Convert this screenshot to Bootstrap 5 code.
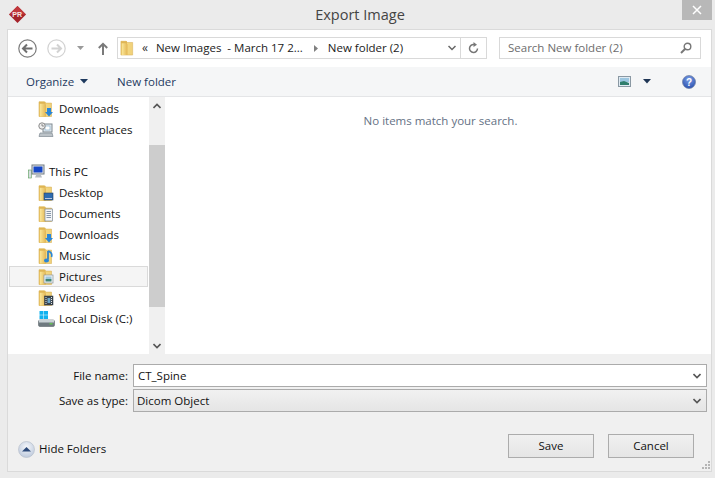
<!DOCTYPE html>
<html lang="en">
<head>
<meta charset="utf-8">
<title>Export Image</title>
<link href="https://cdn.jsdelivr.net/npm/bootstrap@5.3.0/dist/css/bootstrap.min.css" rel="stylesheet">
<style>
html,body{width:715px;height:478px;overflow:hidden;margin:0}
body{background:#ebebeb;font-family:"Open Sans","Noto Sans",sans-serif;font-size:11.5px;color:#111;line-height:1}
.dlg-shell{width:715px;height:478px;display:flex;flex-direction:column}
.dlg-title{height:29px;position:relative;flex:none}
.dlg-title-text{font-size:14.5px;color:#444;padding-top:8px;text-align:center;padding-left:5px}
.dlg-logo{position:absolute;left:9px;top:6px}
.dlg-close{position:absolute;left:682px;top:0;width:30px;height:20px;background:#b8b8b8;display:flex;align-items:center;justify-content:center}
.dlg-panel{margin-left:7px;width:705px;height:443px;border:1px solid #dadada;background:#f0f0f0;display:flex;flex-direction:column;flex:none}
.nav-strip{height:37px;background:#fff;display:flex;align-items:center;flex:none;padding:0 0 1px 10px}
.round-btn{width:19px;height:19px;flex:none}
.fwd-btn{margin-left:10px}
.hist-caret{margin-left:11px}
.up-btn{margin-left:13px}
.addr-box{width:370px;height:22px;margin-left:9px;border:1px solid #d9d9d9;display:flex;align-items:center;background:#fff;flex:none}
.addr-folder{margin-left:2px}
.addr-back{margin-left:7px;font-size:12px;color:#333}
.addr-crumb{margin-left:8px;color:#222;white-space:nowrap}
.addr-arrow{margin-left:11px}
.addr-last{margin-left:9px;color:#222;white-space:nowrap}
.addr-chev{margin-left:auto;margin-right:4px}
.addr-sep{width:26px;height:20px;border-left:1px solid #d9d9d9;display:flex;align-items:center;justify-content:center;flex:none}
.search-box{width:202px;height:22px;margin-left:12px;border:1px solid #d9d9d9;display:flex;align-items:center;padding:0 8px;color:#6d6d6d;justify-content:space-between;flex:none}
.cmd-strip{height:30px;background:#f5f6f7;border-bottom:1px solid #e4e5e7;display:flex;align-items:center;flex:none;color:#1e3a5f;padding-left:18px}
.cmd-caret{margin-left:6px}
.cmd-new{margin-left:29px}
.cmd-right{margin-left:auto;display:flex;align-items:center}
.view-caret{margin-left:12px}
.help-icon{margin:0 15px 0 31px}
.main-area{height:257px;display:flex;flex:none;background:#fff}
.tree-pane{width:140px;height:257px;overflow:hidden;flex:none;background:#fff;padding-top:1px}
.tree-row{height:21px;display:flex;align-items:center;white-space:nowrap;margin-left:1px;border:1px solid transparent;padding-left:28px;gap:5px;width:139px}
.tree-row.top-level{padding-left:18px;gap:4px}
.tree-row.disk-row{padding-left:28px;gap:3px}
.tree-row.picked{background:#f5f5f5;border-color:#dadada}
.tree-row svg{flex:none}
.scroll-rail{width:16px;background:#f0f0f0;flex:none;display:flex;flex-direction:column;margin-left:1px}
.scroll-cap{height:17px;display:flex;align-items:center;justify-content:center;flex:none}
.scroll-space-a{height:31px;flex:none}
.scroll-thumb{height:162px;background:#cdcdcd;flex:none}
.scroll-space-b{flex:1}
.empty-pane{flex:1;text-align:center;color:#647184;padding-top:18px;padding-left:4px;margin-left:1px}
.foot-area{flex:1;position:relative;padding-top:10px}
.form-line{display:flex;align-items:center;height:23px;margin-bottom:2px}
.fld-caption{width:125px;text-align:right;padding-right:5px;flex:none;color:#111}
.combo-box{width:574px;height:23px;border:1px solid #ababab;display:flex;align-items:center;justify-content:space-between;padding:0 5px 0 4px;flex:none;background:#fff}
.combo-box.grey{background:linear-gradient(#f1f1f1,#e5e5e5);padding-left:3px}
.foot-actions{display:flex;align-items:center;margin-top:22px}
.hide-link{display:flex;align-items:center;gap:4px;margin:6px 0 0 10px}
.dlg-btn{width:86px;height:24px;border:1px solid #acacac;background:linear-gradient(#f0f0f0,#e5e5e5);display:flex;align-items:center;justify-content:center;color:#111;flex:none}
.dlg-btn.first{margin-left:auto}
.dlg-btn.last{margin-left:14px;margin-right:17px}
.grip{position:absolute;right:1px;bottom:1px}
.defs-holder{position:absolute;width:0;height:0}
</style>
</head>
<body>
<svg class="defs-holder">
<defs>
<linearGradient id="fg" x1="0" y1="0" x2="1" y2="0"><stop offset="0" stop-color="#fbe89a"/><stop offset="1" stop-color="#e2b553"/></linearGradient>
<linearGradient id="fb" x1="0" y1="0" x2="1" y2="0"><stop offset="0" stop-color="#f7df8a"/><stop offset="1" stop-color="#f0d078"/></linearGradient>
<symbol id="folder" viewBox="0 0 16 16">
<path d="M1 .8h5.500l1 1.300H13.500V15.500H1z" fill="url(#fb)" stroke="#d9b35c" stroke-width=".6"/>
<path d="M1 .8h6.500v14.700H1z" fill="#dfb554"/>
<path d="M1.800 2.800h5l1.200 1.200v11.500H1.800z" fill="url(#fg)"/>
</symbol>
</defs>
</svg>
<div class="dlg-shell">
  <div class="dlg-title">
    <svg class="dlg-logo" width="17" height="17" viewBox="0 0 17 17"><path d="M8.500 0 17 8.500 8.500 17 0 8.500z" fill="#a5232b"/><path d="M8.500 0 17 8.500H0z" fill="#c1383c"/><text x="3.300" y="11" font-family="Liberation Sans" font-size="7" font-weight="700" fill="#f5e6e6">PR</text></svg>
    <div class="dlg-title-text">Export Image</div>
    <div class="dlg-close"><svg width="10" height="10" viewBox="0 0 10 10"><path d="M1 1l8 8M9 1 1 9" stroke="#fff" stroke-width="1.500"/></svg></div>
  </div>
  <div class="dlg-panel">
    <div class="nav-strip">
      <svg class="round-btn" viewBox="0 0 19 19"><circle cx="9.500" cy="9.500" r="8.700" fill="#fff" stroke="#7c7c7c" stroke-width="1.200"/><path d="M14.500 9.500H5.500M9 5.500l-4 4 4 4" fill="none" stroke="#6f6f6f" stroke-width="2"/></svg>
      <svg class="round-btn fwd-btn" viewBox="0 0 19 19"><circle cx="9.500" cy="9.500" r="8.700" fill="#fff" stroke="#d2d2d2" stroke-width="1.200"/><path d="M4.500 9.500h9M10 5.500l4 4-4 4" fill="none" stroke="#d2d2d2" stroke-width="2"/></svg>
      <svg class="hist-caret" width="8" height="5" viewBox="0 0 8 5"><path d="M0 0h7L3.500 4z" fill="#9a9a9a"/></svg>
      <svg class="up-btn" width="10" height="13" viewBox="0 0 10 13"><path d="M5 13V2M.800 6 5 1.800 9.200 6" fill="none" stroke="#7a7a7a" stroke-width="2"/></svg>
      <div class="addr-box">
        <svg class="addr-folder" width="15" height="16"><use href="#folder"/></svg>
        <span class="addr-back">«</span>
        <span class="addr-crumb">New Images&nbsp; - March 17 2...</span>
        <svg class="addr-arrow" width="5" height="7" viewBox="0 0 5 7"><path d="M0 0l4 3.500L0 7z" fill="#808080"/></svg>
        <span class="addr-last">New folder (2)</span>
        <svg class="addr-chev" width="8" height="6" viewBox="0 0 8 6"><path d="M.5 1 4 4.500 7.500 1" fill="none" stroke="#666" stroke-width="1.500"/></svg>
        <div class="addr-sep"><svg width="11" height="12" viewBox="0 0 11 12"><path d="M9.500 6.500A4 4 0 1 1 6 2.500" fill="none" stroke="#777" stroke-width="1.500"/><path d="M5.500 0 9 2.700 5.500 5z" fill="#777"/></svg></div>
      </div>
      <div class="search-box"><span>Search New folder (2)</span><svg width="12" height="12" viewBox="0 0 12 12"><circle cx="7.500" cy="4.500" r="3.300" fill="none" stroke="#777" stroke-width="1.400"/><path d="M5 7 1 11" stroke="#777" stroke-width="2"/></svg></div>
    </div>
    <div class="cmd-strip">
      <span>Organize</span>
      <svg class="cmd-caret" width="8" height="5" viewBox="0 0 8 5"><path d="M0 0h8L4 4.500z" fill="#1e3a5f"/></svg>
      <span class="cmd-new">New folder</span>
      <div class="cmd-right">
        <svg width="13" height="11" viewBox="0 0 13 11"><rect x=".5" y=".5" width="12" height="10" fill="#dfeaf2" stroke="#8a98a3"/><path d="M2 2h9v4H2z" fill="#9cc6e0"/><path d="M2 6l4-1 5 2v2H2z" fill="#2f7d6c"/></svg>
        <svg class="view-caret" width="8" height="5" viewBox="0 0 8 5"><path d="M0 0h8L4 4.500z" fill="#1f3655"/></svg>
        <svg class="help-icon" width="14" height="14" viewBox="0 0 14 14"><defs><radialGradient id="hb" cx=".5" cy=".3" r=".8"><stop offset="0" stop-color="#7c9fe6"/><stop offset="1" stop-color="#1f46a8"/></radialGradient></defs><circle cx="7" cy="7" r="6.500" fill="url(#hb)" stroke="#6f7ea0" stroke-width=".7"/><text x="7" y="10.500" text-anchor="middle" font-family="Liberation Sans" font-weight="700" font-size="10" fill="#fff">?</text></svg>
      </div>
    </div>
    <div class="main-area">
      <div class="tree-pane">
        <div class="tree-row"><svg width="16" height="16"><use href="#folder"/><path d="M9 7h4v4h2l-4 4.500L7 11h2z" fill="#2a86d6"/></svg><span>Downloads</span></div>
        <div class="tree-row"><svg width="16" height="16" viewBox="0 0 16 16"><rect x="5" y="2" width="9" height="8" fill="#e4eaef" stroke="#7f8a92"/><rect x="7" y="4" width="5" height="4" fill="#fff" stroke="#79a7c7" stroke-width=".6"/><circle cx="4" cy="4" r="3.200" fill="#eee" stroke="#8a8a8a"/><path d="M4 2v2h2" fill="none" stroke="#666" stroke-width=".7"/><path d="M2 11h12l1 3.500H1z" fill="#bcc3c8" stroke="#7f8a92" stroke-width=".7"/></svg><span>Recent places</span></div>
        <div class="tree-row"></div>
        <div class="tree-row top-level"><svg width="17" height="15" viewBox="0 0 17 15"><rect x=".3" y="6" width="3" height="8" fill="#d6dde0" stroke="#5aa05a" stroke-width=".6"/><rect x="4" y="1" width="12" height="9" fill="#e6e6e6" stroke="#6f7a82"/><rect x="5.500" y="2.500" width="9" height="6" fill="#1547c7"/><path d="M8 11h5l1 2.500H7z" fill="#b7bec3"/></svg><span>This PC</span></div>
        <div class="tree-row"><svg width="16" height="16"><use href="#folder"/><rect x="6" y="8" width="9" height="7" fill="#2e6cb0" stroke="#27425f" stroke-width=".6"/><path d="M7 13.500h7" stroke="#dde" stroke-width=".8"/></svg><span>Desktop</span></div>
        <div class="tree-row"><svg width="16" height="16"><use href="#folder"/><rect x="7" y="3" width="7.500" height="12" fill="#f4f6f8" stroke="#7d8790" stroke-width=".7"/><path d="M8.500 5.500h4.500M8.500 7.500h4.500M8.500 9.500h4.500M8.500 11.500h4.500" stroke="#6b7f95" stroke-width=".8"/></svg><span>Documents</span></div>
        <div class="tree-row"><svg width="16" height="16"><use href="#folder"/><path d="M9 7h4v4h2l-4 4.500L7 11h2z" fill="#2a86d6"/></svg><span>Downloads</span></div>
        <div class="tree-row"><svg width="16" height="16"><use href="#folder"/><path d="M10 3v8.500" stroke="#1f78c8" stroke-width="1.600"/><ellipse cx="8.500" cy="12.500" rx="2.500" ry="2" fill="#2a86d6"/><path d="M10 3c3 1 4.500 3 3.500 6" fill="none" stroke="#2a86d6" stroke-width="1.600"/></svg><span>Music</span></div>
        <div class="tree-row picked"><svg width="16" height="16"><use href="#folder"/><rect x="6" y="6" width="9" height="8" fill="#eef2f4" stroke="#8b949a" stroke-width=".7"/><path d="M7.500 7.500h6V10h-6z" fill="#9fc8de"/><path d="M7.500 10h6v2.500h-6z" fill="#3e8476"/></svg><span>Pictures</span></div>
        <div class="tree-row"><svg width="16" height="16"><use href="#folder"/><rect x="6.500" y="6" width="8.500" height="9" fill="#3b4650" stroke="#2b3238" stroke-width=".5"/><path d="M8 7v7M13.500 7v7" stroke="#e6e6e6" stroke-width="1" stroke-dasharray="1 1"/><rect x="9.500" y="8" width="2.800" height="5" fill="#6aa4c8"/></svg><span>Videos</span></div>
        <div class="tree-row disk-row"><svg width="18" height="16" viewBox="0 0 18 16"><path d="M1.500 0h4v3.800h-4zM6 0h4v3.800H6zM1.500 4.300h4v3.800h-4zM6 4.300h4v3.800H6z" fill="#12b2ef"/><rect x=".5" y="9" width="16" height="6.500" rx="1.500" fill="#6f7a80" stroke="#5e666b" stroke-width=".6"/><rect x="1" y="9" width="15" height="2.500" fill="#c9d2d6"/><rect x="11.500" y="12" width="3" height="1.500" fill="#62c153"/></svg><span>Local Disk (C:)</span></div>
        <div class="tree-row"></div>
        <div class="tree-row top-level"><svg width="16" height="16" viewBox="0 0 16 16"><circle cx="8" cy="8" r="5" fill="#4c9bd0"/><path d="M3 7h5" stroke="#62b25a" stroke-width="2"/></svg></div>
      </div>
      <div class="scroll-rail">
        <div class="scroll-cap"><svg width="8" height="6" viewBox="0 0 8 6"><path d="M.5 5 4 1.500 7.500 5" fill="none" stroke="#555" stroke-width="1.600"/></svg></div>
        <div class="scroll-space-a"></div>
        <div class="scroll-thumb"></div>
        <div class="scroll-space-b"></div>
        <div class="scroll-cap"><svg width="8" height="6" viewBox="0 0 8 6"><path d="M.5 1 4 4.500 7.500 1" fill="none" stroke="#555" stroke-width="1.600"/></svg></div>
      </div>
      <div class="empty-pane">No items match your search.</div>
    </div>
    <div class="foot-area">
      <div class="form-line"><div class="fld-caption">File name:</div><div class="combo-box"><span>CT_Spine</span><svg width="8" height="6" viewBox="0 0 8 6"><path d="M.5 1 4 4.500 7.500 1" fill="none" stroke="#555" stroke-width="1.600"/></svg></div></div>
      <div class="form-line"><div class="fld-caption">Save as type:</div><div class="combo-box grey"><span>Dicom Object</span><svg width="8" height="6" viewBox="0 0 8 6"><path d="M.5 1 4 4.500 7.500 1" fill="none" stroke="#555" stroke-width="1.600"/></svg></div></div>
      <div class="foot-actions">
        <div class="hide-link"><svg width="17" height="17" viewBox="0 0 17 17"><defs><radialGradient id="hf" cx=".5" cy=".35" r=".7"><stop offset="0" stop-color="#f5f7fb"/><stop offset="1" stop-color="#b9c6da"/></radialGradient></defs><circle cx="8.500" cy="8.500" r="8" fill="url(#hf)" stroke="#b8c0cc" stroke-width=".7"/><path d="M4 10.500 8.500 6l4.500 4.500z" fill="#2d4a7a"/></svg><span>Hide Folders</span></div>
        <div class="dlg-btn first">Save</div>
        <div class="dlg-btn last">Cancel</div>
      </div>
      <svg class="grip" width="9" height="9" viewBox="0 0 9 9"><path d="M7 0h2v2H7zM4 3h2v2H4zM7 3h2v2H7zM1 6h2v2H1zM4 6h2v2H4zM7 6h2v2H7z" fill="#b5b5b5"/></svg>
    </div>
  </div>
</div>
<script src="https://cdn.jsdelivr.net/npm/bootstrap@5.3.0/dist/js/bootstrap.bundle.min.js"></script>
</body>
</html>
